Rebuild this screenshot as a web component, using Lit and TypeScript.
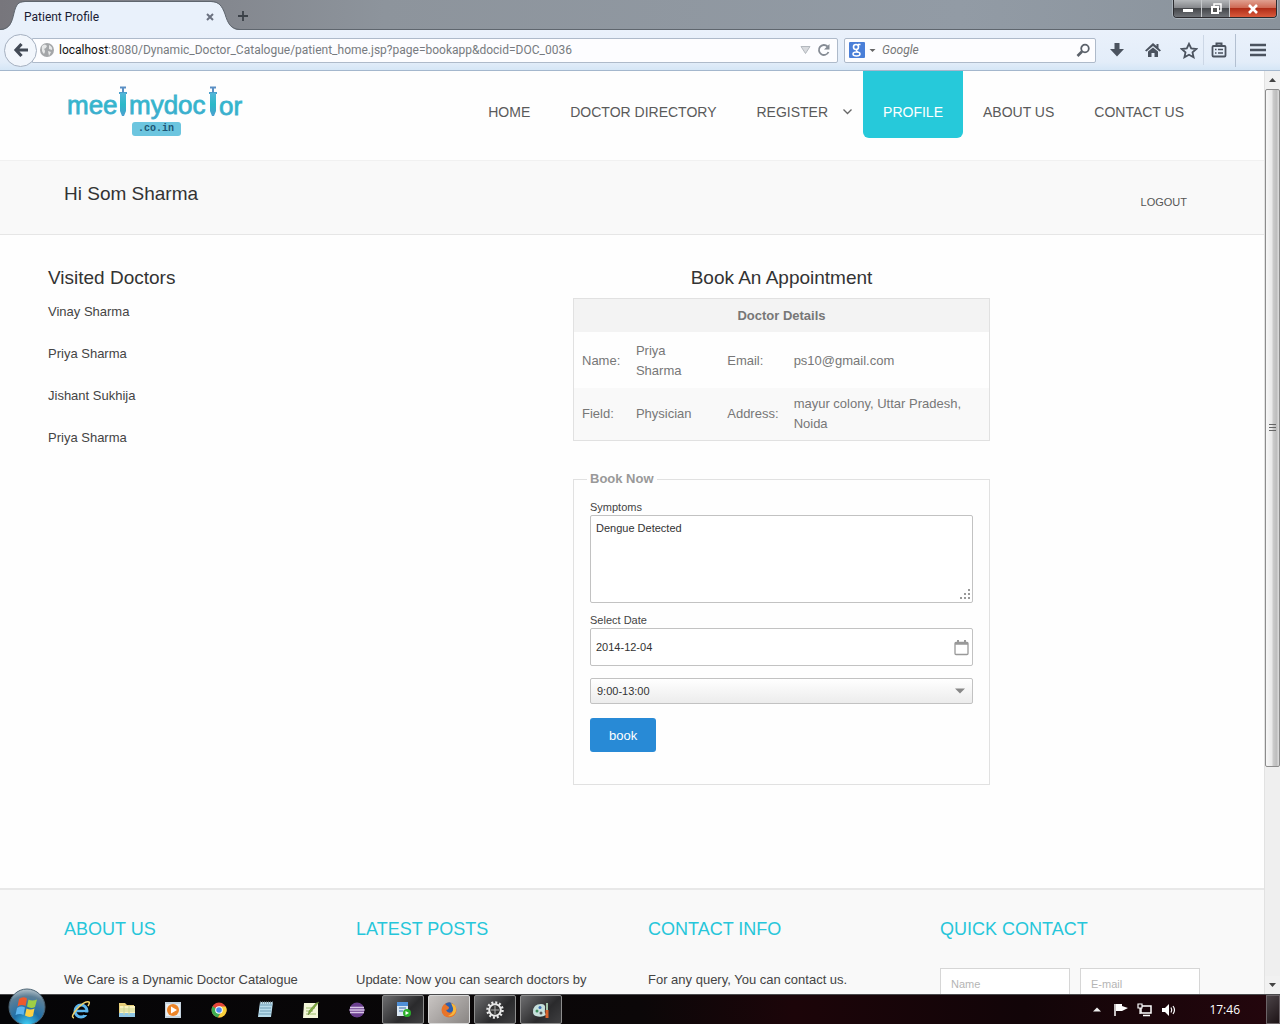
import { LitElement, html, css, svg, nothing } from "lit";
import { customElement, property } from "lit/decorators.js";

/* ---------- Browser chrome ---------- */

@customElement("browser-bar")
class BrowserBar extends LitElement {
  static styles = css`
    :host { display: block; font-family: Roboto, "Open Sans", sans-serif; font-size: 12px; color: #222; }
    * { box-sizing: border-box; }
    button { border: 0; background: none; padding: 0; margin: 0; display: grid; place-items: center; font: inherit; }
    .strip { display: flex; height: 30px; background: linear-gradient(90deg, #77767c, #8d949c 30%, #929ba5 75%, #8a939c); border-bottom: 1px solid #5f666e; }
    .tab { display: grid; grid-template-columns: 100%; flex: none; width: 232px; height: 30px; }
    .tab > * { grid-area: 1 / 1; }
    .shape { overflow: visible; }
    .label { display: flex; align-items: center; justify-content: space-between; padding: 2px 16px 0 24px; color: #1a2033; z-index: 1; }
    .plus { width: 22px; height: 32px; }
    .controls { display: flex; margin-left: auto; margin-right: 3px; height: 18px; border: 1px solid #2b2b2f; border-top: 0; border-radius: 0 0 4px 4px; overflow: hidden; box-shadow: 0 0 0 1px #aab3bb; }
    .controls button { height: 17px; width: 28px; background: linear-gradient(#b4b7ba, #86888c 45%, #45474b 50%, #6f7277); border-right: 1px solid #c5c8cb; }
    .controls .close { width: 46px; background: linear-gradient(#e0a090, #cf6a55 45%, #b02d18 50%, #d95a3c); border: 0; }
    .bar { display: flex; align-items: center; height: 41px; padding: 0 9px 0 4px; background: linear-gradient(#eaf1fb, #e3edf9 80%, #d5e6f6); border-bottom: 1px solid #a4b7cd; }
    .back { flex: none; width: 33px; height: 33px; border: 1px solid #a5b0c0; border-radius: 50%; background: #f2f6fc; margin-right: -5px; z-index: 1; }
    .field { display: flex; align-items: center; height: 25px; background: #fdfdff; border: 1px solid #aebaca; border-radius: 0 2px 2px 0; }
    .url { flex: 1; padding: 0 6px 0 6px; gap: 4px; }
    .address { flex: 1; color: #777b80; white-space: nowrap; overflow: hidden; }
    .host { color: #111; }
    .reload { margin-left: 2px; }
    .search { width: 252px; margin-left: 6px; padding: 0 4px; gap: 4px; border-radius: 2px; }
    .search input { flex: 1; min-width: 0; border: 0; outline: 0; padding: 0 2px; background: none; font: inherit; font-size: 12px; font-style: italic; }
    .search input::placeholder { color: #777; opacity: 1; }
    .tools { display: flex; align-items: center; padding-left: 3px; }
    .tools button { width: 36px; height: 30px; }
    .tools .narrow { width: 30px; border-left: 1px solid #ccd7e6; margin-left: -4px; }
    .tools .menu { width: 44px; border-left: 1px solid #b3c0d1; margin-left: 2px; margin-right: -8px; height: 33px; }
  `;

  render() {
    return html`
      <div class="strip">
        <div class="tab">
          <svg class="shape" width="240" height="31" viewBox="0 0 240 31">
            <path d="M0 30C10 30 12 22 14 13C16 5 18 2 25 2H211C219 2 222 6 225 14C228 24 231 30 240 30V31H0Z" fill="#e9f1fb" />
            <path d="M0 29.500C10 29 12 22 14 13C16 5 18 1.500 25 1.500H211C219 1.500 222 6 225 14C228 24 231 29 240 29.500" fill="none" stroke="#5f666e" />
          </svg>
          <div class="label">
            <span>Patient Profile</span>
            <button aria-label="Close tab">
              <svg width="12" height="12" viewBox="0 0 12 12"><path d="M3 3L9 9M9 3L3 9" stroke="#6b7280" stroke-width="2" /></svg>
            </button>
          </div>
        </div>
        <button class="plus" aria-label="New tab">
          <svg width="12" height="12" viewBox="0 0 12 12"><path d="M1 6H11M6 1V11" stroke="#3b4148" stroke-width="1.800" /></svg>
        </button>
        <div class="controls">
          <button aria-label="Minimize"><svg width="14" height="12" viewBox="0 0 14 12"><rect x="2" y="6" width="10" height="3" fill="#fff" /></svg></button>
          <button aria-label="Restore">
            <svg width="14" height="14" viewBox="0 0 14 14"><path d="M5 4V2H12V9H10" fill="none" stroke="#fff" stroke-width="1.500" /><rect x="3" y="5" width="6" height="6" fill="#555" stroke="#fff" stroke-width="2" /></svg>
          </button>
          <button class="close" aria-label="Close window"><svg width="14" height="14" viewBox="0 0 14 14"><path d="M3 3L11 11M11 3L3 11" stroke="#fff" stroke-width="2.600" /></svg></button>
        </div>
      </div>
      <div class="bar">
        <button class="back" aria-label="Back">
          <svg width="18" height="18" viewBox="0 0 18 18"><path d="M9.500 3L4 9L9.500 15M4.500 9H16" fill="none" stroke="#434a56" stroke-width="3.200" /></svg>
        </button>
        <div class="field url">
          <svg width="16" height="16" viewBox="0 0 16 16">
            <circle cx="8" cy="8" r="7" fill="#a4a6a9" />
            <path d="M3 4Q6 1 8 4Q7 7 5 7Q7 9 5 12Q2 9 3 4ZM10 3Q14 5 13 8L10 7ZM9 9L12 10L10 14Z" fill="#e6e7e8" />
          </svg>
          <span class="address"><span class="host">localhost</span>:8080/Dynamic_Doctor_Catalogue/patient_home.jsp?page=bookapp&amp;docid=DOC_0036</span>
          <svg width="11" height="10" viewBox="0 0 11 10"><path d="M1 1.500H10L5.500 8.500Z" fill="#d8dade" stroke="#b3b8be" /></svg>
          <button class="reload" aria-label="Reload">
            <svg width="14" height="14" viewBox="0 0 14 14"><path d="M11.500 9A5 5 0 1 1 10.500 3.500" fill="none" stroke="#858b94" stroke-width="1.800" /><path d="M12.500 1V6.500H7Z" fill="#858b94" /></svg>
          </button>
        </div>
        <div class="field search">
          <svg width="16" height="16" viewBox="0 0 16 16">
            <rect width="16" height="16" rx="1" fill="#4a7fd8" />
            <circle cx="7" cy="5" r="2.500" fill="none" stroke="#fff" stroke-width="1.600" /><path d="M9 2.500H11.500M8.500 7.500Q6 9 9 10" stroke="#fff" stroke-width="1.400" fill="none" /><ellipse cx="7.500" cy="12" rx="3.500" ry="2" fill="none" stroke="#fff" stroke-width="1.500" />
          </svg>
          <svg width="7" height="5" viewBox="0 0 7 5"><path d="M0.500 1H6.500L3.500 4Z" fill="#666" /></svg>
          <input type="text" placeholder="Google" aria-label="Search" />
          <svg width="15" height="15" viewBox="0 0 15 15"><circle cx="9" cy="5.500" r="3.800" fill="none" stroke="#5b616a" stroke-width="1.800" /><path d="M6 8.500L1.500 13" stroke="#5b616a" stroke-width="2.600" /></svg>
        </div>
        <div class="tools">
          <button aria-label="Downloads"><svg width="16" height="16" viewBox="0 0 16 16"><path d="M5.500 1H10.500V7H15L8 14.500L1 7H5.500Z" fill="#4b535f" /></svg></button>
          <button aria-label="Home"><svg width="18" height="16" viewBox="0 0 18 16"><path d="M9 1L1 8.500L2.500 9.500L9 4L15.500 9.500L17 8.500L14.500 6V2H12.500V4Z" fill="#4b535f" /><path d="M4 9.500L9 5.500L14 9.500V15H10.500V11H7.500V15H4Z" fill="#4b535f" /></svg></button>
          <button aria-label="Bookmark"><svg width="18" height="17" viewBox="0 0 18 17"><path d="M9 1.800L11.200 6.400L16.300 7L12.500 10.400L13.600 15.300L9 12.800L4.400 15.300L5.500 10.400L1.700 7L6.800 6.400Z" fill="none" stroke="#4b535f" stroke-width="1.800" /></svg></button>
          <button class="narrow" aria-label="Bookmarks list"><svg width="16" height="16" viewBox="0 0 16 16"><path d="M5.500 3V1.500H10.500V3" fill="none" stroke="#4b535f" stroke-width="2" /><rect x="1.500" y="4" width="13" height="10.500" rx="1" fill="none" stroke="#4b535f" stroke-width="1.800" /><path d="M4 7.500H5.500M7 7.500H12M4 11H5.500M7 11H12" stroke="#4b535f" stroke-width="1.600" /></svg></button>
          <button class="menu" aria-label="Menu"><svg width="16" height="14" viewBox="0 0 16 14"><path d="M0 2H16M0 7H16M0 12H16" stroke="#4b535f" stroke-width="2.600" /></svg></button>
        </div>
      </div>
    `;
  }
}

/* ---------- Site header ---------- */

const NAV = [
  { label: "HOME" },
  { label: "DOCTOR DIRECTORY" },
  { label: "REGISTER", sub: true },
  { label: "PROFILE", active: true },
  { label: "ABOUT US" },
  { label: "CONTACT US" },
];

const syringe = (x: number) => svg`
  <path d="M${x} 1.500h6M${x + 3} 1v6" stroke="#5b8fc4" stroke-width="2" fill="none" />
  <path d="M${x - 1} 7h8" stroke="#4a9fcb" stroke-width="2" />
  <path d="M${x} 7h6v18l-2 5h-2l-2-5z" fill="url(#ink)" />
`;

@customElement("site-header")
class SiteHeader extends LitElement {
  static styles = css`
    :host { display: block; }
    .head { display: flex; justify-content: space-between; align-items: flex-start; height: 89px; padding: 0 60px 0 64px; }
    .logo { display: block; padding-top: 15px; }
    .logo svg { display: block; overflow: visible; }
    .word { font-family: "Liberation Sans", sans-serif; font-size: 26px; }
    .tld { font-family: "Liberation Mono", monospace; font-size: 10px; font-weight: bold; }
    nav { display: flex; }
    .link { display: flex; align-items: center; height: 67px; padding: 15px 20px 0; box-sizing: border-box; font-size: 14px; color: #5a5a5a; text-decoration: none; white-space: nowrap; }
    .sub { padding-right: 10px; gap: 14px; }
    .active { background: #26c9da; color: #fff; border-radius: 0 0 6px 6px; }
    .hello { display: flex; justify-content: space-between; height: 75px; box-sizing: border-box; padding: 20px 77px 22px 64px; background: #f9f9f9; border-top: 1px solid #f1f1f1; border-bottom: 1px solid #e6e6e6; }
    h1 { margin: 0; font-size: 19px; line-height: 26px; font-weight: normal; color: #333; }
    .logout { align-self: flex-end; font-size: 11px; line-height: 20px; color: #555; text-decoration: none; }
  `;

  render() {
    return html`
      <header class="head">
        <a class="logo" href="#" aria-label="meetmydoctor.co.in">
          <svg width="180" height="50" viewBox="0 0 180 50">
            <defs>
              <linearGradient id="ink" x1="0" y1="0" x2="0" y2="1">
                <stop offset="0" stop-color="#52b6d8" /><stop offset="0.500" stop-color="#2bb9c8" /><stop offset="1" stop-color="#4b9fd0" />
              </linearGradient>
            </defs>
            <g class="word" fill="url(#ink)" stroke="#3fb3d0" stroke-width="0.800">
              <text x="3" y="28">mee</text>
              <text x="65" y="28">mydoc</text>
              <text x="155" y="29">or</text>
            </g>
            ${syringe(56)}${syringe(146)}
            <rect x="68" y="36" width="49" height="14" rx="3" fill="#6cc5df" />
            <text class="tld" x="74" y="45" fill="#1d5674">.co.in</text>
          </svg>
        </a>
        <nav>
          ${NAV.map((n) => html`<a href="#" class="link ${n.sub ? "sub" : ""} ${n.active ? "active" : ""}">${n.label}${n.sub
            ? html`<svg width="11" height="8" viewBox="0 0 11 8"><path d="M1.500 1.500L5.500 5.500L9.500 1.500" fill="none" stroke="#666" stroke-width="1.300" /></svg>`
            : nothing}</a>`)}
        </nav>
      </header>
      <div class="hello">
        <h1>Hi Som Sharma</h1>
        <a class="logout" href="#">LOGOUT</a>
      </div>
    `;
  }
}

/* ---------- Appointment booking ---------- */

const VISITED = ["Vinay Sharma", "Priya Sharma", "Jishant Sukhija", "Priya Sharma"];

@customElement("booking-page")
class BookingPage extends LitElement {
  static styles = css`
    :host { display: block; }
    * { box-sizing: border-box; }
    .cols { display: grid; grid-template-columns: 525fr 417fr 274fr; padding: 30px 0 103px 48px; }
    h2 { margin: 0; font-size: 19px; line-height: 26px; font-weight: normal; color: #333; }
    .centered { text-align: center; }
    ul { list-style: none; margin: 0; padding: 0; }
    li { font-size: 13px; line-height: 42px; }
    li a { color: #444; text-decoration: none; }
    table { width: 100%; margin-top: 7px; border-collapse: separate; border-spacing: 0; border: 1px solid #e1e1e1; font-size: 13px; line-height: 20px; color: #777; table-layout: fixed; }
    th { background: #f3f3f3; padding: 7px 8px; height: 33px; line-height: 19px; }
    td { padding: 9px 8px 7px; text-align: left; }
    .even td { background: #f9f9f9; padding: 6px 8px; }
    .c1 { width: 13%; } .c2 { width: 22%; } .c3 { width: 16%; }
    fieldset { margin: 28px 0 0; padding: 10px 16px 32px; border: 1px solid #e1e1e1; min-width: 0; }
    legend { margin-left: -3px; padding: 0 3px; font-size: 13px; line-height: 20px; font-weight: bold; color: #999; }
    .form { display: flex; flex-direction: column; }
    label { font-size: 11px; line-height: 16px; color: #444; }
    .stack { display: grid; }
    .stack > * { grid-area: 1 / 1; }
    .stack svg { place-self: center end; margin-right: 4px; pointer-events: none; }
    .stack .grip { place-self: end end; margin: 2px; }
    textarea, input, select { width: 100%; margin: 0; border: 1px solid #c2c2c2; border-radius: 2px; background: #fff; color: #333; font-family: inherit; font-size: 11px; outline: 0; }
    textarea { display: block; height: 88px; padding: 4px 5px; line-height: 16px; resize: none; }
    .area { margin-bottom: 9px; }
    input { height: 38px; padding: 0 5px; }
    select { appearance: none; height: 26px; margin-top: 12px; padding: 0 6px; background: linear-gradient(#fff, #ececec); }
    .stack .arrow { margin-top: 12px; margin-right: 8px; }
    .book { align-self: flex-start; height: 34px; margin-top: 14px; padding: 0 19px; border: 0; border-radius: 3px; background: #288ad6; color: #fff; font-family: inherit; font-size: 13px; }
  `;

  render() {
    return html`
      <main class="cols">
        <section>
          <h2>Visited Doctors</h2>
          <ul>${VISITED.map((n) => html`<li><a href="#">${n}</a></li>`)}</ul>
        </section>
        <section>
          <h2 class="centered">Book An Appointment</h2>
          <table>
            <colgroup><col class="c1" /><col class="c2" /><col class="c3" /><col /></colgroup>
            <thead><tr><th colspan="4">Doctor Details</th></tr></thead>
            <tbody>
              <tr><td>Name:</td><td>Priya<br />Sharma</td><td>Email:</td><td>ps10@gmail.com</td></tr>
              <tr class="even"><td>Field:</td><td>Physician</td><td>Address:</td><td>mayur colony, Uttar Pradesh, Noida</td></tr>
            </tbody>
          </table>
          <fieldset>
            <legend>Book Now</legend>
            <div class="form">
              <label for="symptoms">Symptoms</label>
              <div class="stack area">
                <textarea id="symptoms" .value=${"Dengue Detected"}></textarea>
                <svg class="grip" width="12" height="12" viewBox="0 0 12 12"><path d="M9 1h2M5 5h2M9 5h2M1 9h2M5 9h2M9 9h2" stroke="#999" stroke-width="2" /></svg>
              </div>
              <label for="date">Select Date</label>
              <div class="stack">
                <input id="date" type="text" .value=${"2014-12-04"} />
                <svg width="15" height="17" viewBox="0 0 15 17"><rect x="1" y="3.500" width="13" height="12" rx="1" fill="#fff" stroke="#999" stroke-width="1.300" /><path d="M1 4.500H14" stroke="#999" stroke-width="2.500" /><path d="M4 1V4M11 1V4" stroke="#999" stroke-width="2" /></svg>
              </div>
              <div class="stack">
                <select aria-label="Time slot"><option>9:00-13:00</option></select>
                <svg class="arrow" width="10" height="6" viewBox="0 0 10 6"><path d="M0 0.500H10L5 5.500Z" fill="#888" /></svg>
              </div>
              <button class="book">book</button>
            </div>
          </fieldset>
        </section>
      </main>
    `;
  }
}

/* ---------- Site footer ---------- */

@customElement("site-footer")
class SiteFooter extends LitElement {
  static styles = css`
    :host { display: block; flex: 1; background: #f9f9f9; border-top: 2px solid #e8e8e8; }
    * { box-sizing: border-box; }
    .cols { display: grid; grid-template-columns: repeat(4, 1fr); gap: 32px; padding: 26px 64px; }
    h3 { margin: 0 0 26px; font-size: 18px; line-height: 26px; font-weight: normal; color: #26c6da; }
    p { margin: 0; font-size: 13px; line-height: 24px; color: #444; white-space: nowrap; }
    .pair { display: grid; grid-template-columns: 130fr 120fr; gap: 10px; }
    input { width: 100%; height: 32px; padding: 0 10px; border: 1px solid #d6d6d6; background: #fff; font-family: inherit; font-size: 11px; }
    input::placeholder { color: #b5b5b5; opacity: 1; }
  `;

  render() {
    return html`
      <footer class="cols">
        <section><h3>ABOUT US</h3><p>We Care is a Dynamic Doctor Catalogue</p></section>
        <section><h3>LATEST POSTS</h3><p>Update: Now you can search doctors by</p></section>
        <section><h3>CONTACT INFO</h3><p>For any query, You can contact us.</p></section>
        <section>
          <h3>QUICK CONTACT</h3>
          <div class="pair">
            <input type="text" placeholder="Name" aria-label="Name" />
            <input type="text" placeholder="E-mail" aria-label="E-mail" />
          </div>
        </section>
      </footer>
    `;
  }
}

/* ---------- Scrollbar ---------- */

@customElement("side-scroll")
class SideScroll extends LitElement {
  @property({ type: Number }) visible = 1;
  @property({ type: Number }) total = 1;

  static styles = css`
    :host { display: flex; flex-direction: column; width: 16px; background: #efefef; border-left: 1px solid #e2e2e2; box-sizing: border-box; }
    .end { flex: none; height: 18px; padding: 0; border: 0; background: #f1f1f1; display: grid; place-items: center; }
    .track { flex: 1; min-height: 0; }
    .thumb { display: grid; place-items: center; box-sizing: border-box; border: 1px solid #8c8c8c; border-radius: 2px; background: linear-gradient(90deg, #f7f7f7, #e9e9e9 45%, #cbcbcb 55%, #bdbdbd 80%, #dedede); }
  `;

  render() {
    return html`
      <button class="end" aria-label="Scroll up"><svg width="7" height="4" viewBox="0 0 7 4"><path d="M0 4L3.500 0L7 4Z" fill="#444" /></svg></button>
      <div class="track">
        <div class="thumb" style="height: ${(100 * this.visible) / this.total}%">
          <svg width="8" height="9" viewBox="0 0 8 9"><path d="M0 1.500H7M0 4.500H7M0 7.500H7" stroke="#666" /></svg>
        </div>
      </div>
      <button class="end" aria-label="Scroll down"><svg width="7" height="4" viewBox="0 0 7 4"><path d="M0 0L3.500 4L7 0Z" fill="#444" /></svg></button>
    `;
  }
}

/* ---------- Desktop taskbar ---------- */

const APPS = [
  { name: "Internet Explorer", art: svg`<circle cx="10" cy="11" r="6" fill="none" stroke="#5db7ee" stroke-width="3" /><path d="M5 11H16" stroke="#5db7ee" stroke-width="2.500" /><path d="M12 12.500H18V15H13Z" fill="#000" /><path d="M3 18Q-1 17 6 9Q14 0 18 2Q19 3 17 6" fill="none" stroke="#f2d26a" stroke-width="1.500" />` },
  { name: "Explorer", art: svg`<path d="M2 3H8L10 5H17V17H2Z" fill="#e8cf7a" /><rect x="3" y="6" width="15" height="9" fill="#fbf3bf" /><path d="M2 13H18V17H2Z" fill="#8fc6e4" /><path d="M3 9H18M3 11H18M7 6V15M12 6V15" stroke="#cdd694" />` },
  { name: "Media Player", art: svg`<rect x="2" y="2" width="16" height="16" fill="#c5d3de" /><rect x="3" y="4" width="14" height="12" fill="#e9edf0" /><circle cx="10" cy="10" r="6" fill="#ed8427" /><path d="M8 6.500L14 10L8 13.500Z" fill="#fff" />` },
  { name: "Chrome", art: svg`<circle cx="10" cy="10" r="7.500" fill="#e5463a" /><path d="M3.500 6.300A7.500 7.500 0 0 0 9 17.400L12 12Z" fill="#3fae50" /><path d="M10 6.500H16.800A7.500 7.500 0 0 1 9 17.400L13 11Z" fill="#f8d13c" /><circle cx="10" cy="10" r="3.800" fill="#fff" /><circle cx="10" cy="10" r="2.800" fill="#4a8af0" />` },
  { name: "Notepad", art: svg`<path d="M5 2H18L16 17H3Z" fill="#b9dcec" /><path d="M5 5H17M5 8H16M5 11H16M4 14H16" stroke="#6f9db5" /><path d="M5 2.500H18" stroke="#7c8d96" stroke-width="2" stroke-dasharray="1 1" />` },
  { name: "Notepad++", art: svg`<path d="M3 3H17V18H2Z" fill="#f3f6d8" /><path d="M5 8H14M5 11H12M5 14H15" stroke="#9dbf6c" /><path d="M18 2L9 13L7 15L8 11L15 3Z" fill="#7eb13c" stroke="#5a6a35" stroke-width="0.500" />` },
  { name: "Eclipse", art: svg`<circle cx="10" cy="10" r="7.500" fill="#6b3f8f" /><path d="M3 7.500H17M2.500 10H17.500M3 12.500H17" stroke="#d9c6e8" stroke-width="1.300" />` },
  { name: "NetBeans", open: true, art: svg`<rect x="4" y="2" width="11" height="4" fill="#4f8fd6" /><rect x="4" y="6" width="11" height="10" fill="#dce9f5" /><path d="M6 8H13M6 11H10" stroke="#6f97c0" stroke-width="1.500" /><circle cx="14" cy="13" r="4" fill="#2bb02b" /><path d="M12.500 11L16 13L12.500 15Z" fill="#fff" />` },
  { name: "Firefox", open: true, focus: true, art: svg`<circle cx="10" cy="10" r="7.500" fill="#e8742a" /><path d="M6 4Q11 0 15 5Q16 9 13 12Q9 14 7 10Q10 10 10 7Q8 6 6 4Z" fill="#2c5fae" /><path d="M12 3Q18 5 17 11Q15 17 9 16Q15 13 14 8Z" fill="#f6b73c" />` },
  { name: "Settings", open: true, art: svg`<circle cx="10" cy="10" r="7.500" fill="none" stroke="#e8e8e8" stroke-width="2.500" stroke-dasharray="2 1.930" /><circle cx="10" cy="10" r="5.800" fill="#333" stroke="#e8e8e8" stroke-width="2" /><path d="M10 6V14M6 10H14" stroke="#aaa" />` },
  { name: "Paint", open: true, art: svg`<path d="M2 12Q2 4 10 4Q15 4 14 9Q13 12 15 15Q10 18 5 16Q2 15 2 12Z" fill="#c7e0dc" /><circle cx="6" cy="11" r="1.500" fill="#3f8f5f" /><circle cx="9" cy="7.500" r="1.500" fill="#3c6fb0" /><circle cx="10" cy="13" r="1.500" fill="#555" /><path d="M16 3V11" stroke="#a4c4a8" stroke-width="2" /><path d="M16 10V18" stroke="#d9622b" stroke-width="3" />` },
];

@customElement("task-bar")
class TaskBar extends LitElement {
  static styles = css`
    :host { display: block; font-family: "Open Sans", "Noto Sans", sans-serif; }
    * { box-sizing: border-box; }
    .bar { display: flex; height: 30px; background: linear-gradient(90deg, #050507, #0b0708 50%, #1c0509 62%, #120508 80%, #24060d); border-top: 1px solid #4a4a4c; }
    button { display: grid; place-items: center; padding: 0; border: 0; background: none; color: inherit; font: inherit; }
    .start { width: 60px; padding-left: 8px; justify-items: start; align-items: start; }
    .start svg { margin-top: -7px; }
    .apps { display: flex; gap: 4px; }
    .app { width: 42px; height: 29px; }
    .open { border: 1px solid #8d8d8d; border-radius: 2px; background: linear-gradient(135deg, #6d6d6f, #2a2a2c 60%, #3f3f41); }
    .focus { border-color: #d8d8d8; background: linear-gradient(135deg, #c8c4c2, #8a8684); }
    .tray { display: flex; align-items: center; margin-left: auto; color: #fff; font-size: 12px; }
    .icon { width: 24px; height: 29px; }
    .time { margin: 0 26px 0 28px; }
    .desk { width: 14px; height: 29px; border: 1px solid #6b6367; background: linear-gradient(135deg, #4b4347, #1d1316); }
  `;

  render() {
    return html`
      <div class="bar">
        <button class="start" aria-label="Start">
          <svg width="38" height="38" viewBox="0 0 38 38">
            <defs>
              <radialGradient id="orb" cx="0.500" cy="1" r="1"><stop offset="0" stop-color="#3fd0f5" /><stop offset="0.400" stop-color="#1f6fa8" /><stop offset="0.800" stop-color="#5d7f96" /><stop offset="1" stop-color="#b6c4cc" /></radialGradient>
            </defs>
            <circle cx="19" cy="19" r="18" fill="url(#orb)" stroke="#4b6373" />
            <path d="M11 11Q15 8 19 10.500L17.500 18Q13.500 16 9.500 18.500Z" fill="#ee5a2c" />
            <path d="M20.500 11.500Q24 13.500 29 11.500L27 19Q23 21 19 18.500Z" fill="#9fce45" />
            <path d="M9 20Q13 17.500 17 19.500L15.500 27Q12 25 7.500 27Z" fill="#5db5ef" />
            <path d="M18.500 20.500Q22.500 22.500 26.500 20.500L25 28Q21 30 17 27.500Z" fill="#fbd045" />
          </svg>
        </button>
        <div class="apps">
          ${APPS.map((a) => html`<button class="app ${a.open ? "open" : ""} ${a.focus ? "focus" : ""}" aria-label=${a.name}><svg width="20" height="20" viewBox="0 0 20 20">${a.art}</svg></button>`)}
        </div>
        <div class="tray">
          <button class="icon" aria-label="Show hidden icons"><svg width="8" height="5" viewBox="0 0 8 5"><path d="M0 4.500L4 0.500L8 4.500Z" fill="#eee" /></svg></button>
          <button class="icon" aria-label="Action center"><svg width="16" height="14" viewBox="0 0 16 14"><path d="M2 1V13" stroke="#fff" stroke-width="1.500" /><path d="M3 1H9V3L15 5L9 8H3Z" fill="#fff" /></svg></button>
          <button class="icon" aria-label="Network"><svg width="16" height="14" viewBox="0 0 16 14"><rect x="4" y="3" width="10" height="7" fill="none" stroke="#fff" stroke-width="1.500" /><path d="M6 12.500H13" stroke="#fff" stroke-width="1.500" /><path d="M1 1H5V5H1ZM3 5V11" fill="#1c0a10" stroke="#fff" stroke-width="1.200" /></svg></button>
          <button class="icon" aria-label="Volume"><svg width="16" height="14" viewBox="0 0 16 14"><path d="M1 5H4L8 1V13L4 9H1Z" fill="#fff" /><path d="M10 4.500Q11.500 7 10 9.500M12 3Q15 7 12 11" fill="none" stroke="#fff" stroke-width="1.200" /></svg></button>
          <span class="time">17:46</span>
          <button class="desk" aria-label="Show desktop"></button>
        </div>
      </div>
    `;
  }
}

/* ---------- Page ---------- */

@customElement("app-root")
class AppRoot extends LitElement {
  static styles = css`
    :host { display: flex; flex-direction: column; height: 100vh; font-family: "Liberation Sans", Arial, sans-serif; background: #fefefe; }
    .view { flex: 1; min-height: 0; display: flex; }
    .page { flex: 1; min-width: 0; overflow: hidden; display: flex; flex-direction: column; }
    .page > * { flex-shrink: 0; }
    .tasks { z-index: 1; }
  `;

  render() {
    return html`
      <browser-bar></browser-bar>
      <div class="view">
        <div class="page">
          <site-header></site-header>
          <booking-page></booking-page>
          <site-footer></site-footer>
        </div>
        <side-scroll visible="923" total="1208"></side-scroll>
      </div>
      <task-bar class="tasks"></task-bar>
    `;
  }
}
